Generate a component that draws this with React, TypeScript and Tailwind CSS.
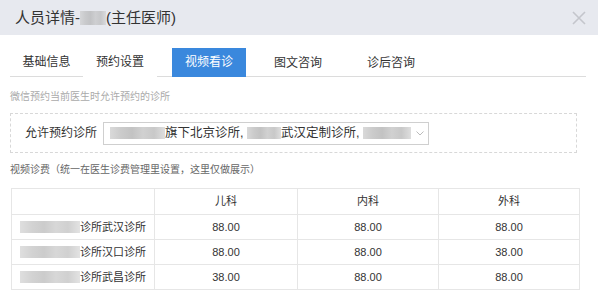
import React from "react";

const Blur = ({ w, h = 12, className = "" }: { w: number; h?: number; className?: string }) => (
  <span
    className={`inline-block align-middle ${className}`}
    style={{
      width: w,
      height: h,
      background:
        "linear-gradient(90deg,#c9c9c9 0%,#b5b5b5 20%,#a9a9a9 40%,#bdbdbd 60%,#b1b1b1 80%,#d0d0d0 100%)",
    }}
  />
);

const rows = [
  { name: "诊所武汉诊所", v: ["88.00", "88.00", "88.00"] },
  { name: "诊所汉口诊所", v: ["88.00", "88.00", "38.00"] },
  { name: "诊所武昌诊所", v: ["38.00", "88.00", "88.00"] },
];

export default function App() {
  const font = { fontFamily: '"Liberation Sans", "Noto Sans CJK SC", sans-serif' };
  return (
    <div className="w-[598px] h-[308px] bg-white overflow-hidden text-[#333]" style={font}>
      {/* header */}
      <div className="h-[35px] bg-[#e7e9ef] flex items-center justify-between pl-[15px] pr-[10px]">
        <div className="flex items-center text-[15px] text-[#333] leading-none">
          <span>人员详情-</span>
          <Blur w={26} h={14} className="opacity-60" />
          <span>(主任医师)</span>
        </div>
        <svg width="14" height="14" viewBox="0 0 14 14" className="mr-[2px]">
          <path d="M1 1 L13 13 M13 1 L1 13" stroke="#c4c6cc" strokeWidth="1.6" />
        </svg>
      </div>

      {/* tabs */}
      <div className="mt-[13px] ml-[10px] w-[576px] flex border-b border-[#dcdcdc] h-[29px] text-[12px]">
        <div className="w-[73px] h-[29px] -mb-px border-b border-[#dcdcdc] flex items-center justify-center text-[#333]">基础信息</div>
        <div className="w-[74px] h-[29px] -mb-px border-b border-white flex items-center justify-center text-[#333]">预约设置</div>
        <div className="ml-[15px] w-[74px] h-[29px] -mb-px bg-[#3a88dd] border-b border-[#3a88dd] flex items-center justify-center text-white">视频看诊</div>
        <div className="ml-[15px] w-[74px] h-[29px] flex items-center justify-center text-[#333]">图文咨询</div>
        <div className="ml-[19px] w-[74px] h-[29px] flex items-center justify-center text-[#333]">诊后咨询</div>
      </div>

      {/* note */}
      <div className="ml-[10px] mt-[14px] text-[10px] leading-[12px] text-[#aaa]">微信预约当前医生时允许预约的诊所</div>

      {/* dashed box */}
      <div className="ml-[10px] mt-[10px] w-[567px] h-[40px] border border-dashed border-[#d8d8d8] flex items-center pl-[14px]">
        <span className="text-[12px] text-[#333] w-[78px]">允许预约诊所</span>
        <div className="w-[326px] h-[23px] border border-[#cfcfcf] flex items-center pl-[6px] text-[12.5px] text-[#333] whitespace-pre overflow-hidden">
          <Blur w={55} h={12} className="opacity-70" />
          <span>旗下北京诊所, </span>
          <Blur w={34} h={12} className="opacity-70" />
          <span>武汉定制诊所, </span>
          <Blur w={48} h={12} className="opacity-70" />
          <span className="ml-auto mr-[3px]">
            <svg width="10" height="10" viewBox="0 0 10 10">
              <path d="M1.5 3.5 L5 7 L8.5 3.5" stroke="#bbb" strokeWidth="1" fill="none" />
            </svg>
          </span>
        </div>
      </div>

      {/* fee note */}
      <div className="ml-[10px] mt-[11px] text-[10px] leading-[12px] text-[#666]">视频诊费（统一在医生诊费管理里设置，这里仅做展示）</div>

      {/* table */}
      <table className="ml-[11px] mt-[12px] w-[568px] border-collapse text-[11px] text-[#333] table-fixed">
        <colgroup>
          <col className="w-[143px]" />
          <col className="w-[143px]" />
          <col className="w-[141px]" />
          <col className="w-[141px]" />
        </colgroup>
        <thead>
          <tr className="h-[26px]">
            <th className="border border-[#e6e6e6] font-normal"></th>
            <th className="border border-[#e6e6e6] font-normal">儿科</th>
            <th className="border border-[#e6e6e6] font-normal">内科</th>
            <th className="border border-[#e6e6e6] font-normal">外科</th>
          </tr>
        </thead>
        <tbody>
          {rows.map((r) => (
            <tr key={r.name} className="h-[25px]">
              <td className="border border-[#e6e6e6] pl-[8px] whitespace-nowrap">
                <span className="flex items-center">
                  <Blur w={60} h={12} className="opacity-60" />
                  <span>{r.name}</span>
                </span>
              </td>
              {r.v.map((v, i) => (
                <td key={i} className="border border-[#e6e6e6] text-center">{v}</td>
              ))}
            </tr>
          ))}
        </tbody>
      </table>
    </div>
  );
}
